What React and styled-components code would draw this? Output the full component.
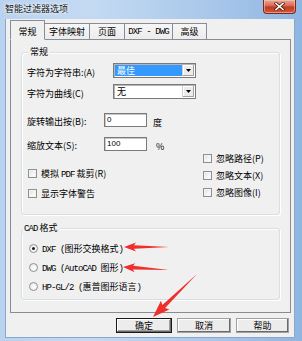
import React from "react";
import styled, { createGlobalStyle } from "styled-components";

const Global = createGlobalStyle`
  html, body { margin: 0; padding: 0; }
  body {
    width: 302px; height: 341px; overflow: hidden; background: #ffffff;
    font-family: "Noto Sans CJK SC", sans-serif;
  }
`;

const CJK = `"Noto Sans CJK SC", sans-serif`;
const MONO = `"Liberation Mono", "Noto Sans CJK SC", monospace`;

const Window = styled.div`
  position: relative;
  width: 302px;
  height: 341px;
  box-sizing: border-box;
  display: flex;
  flex-direction: column;
  padding: 0 7px 3px 5px;
  background: linear-gradient(90deg, #b9d2ef 0%, #c4daf3 30%, #a9c7ea 70%, #8fb5e2 100%);
`;

const TitleBar = styled.div`
  height: 19px;
  display: flex;
  align-items: flex-start;
  flex: none;
`;

const TitleText = styled.div`
  font-family: ${CJK};
  font-size: 9px;
  line-height: 18px;
  color: #101010;
  text-shadow: 0 0 4px #ffffff, 0 0 2px #ffffff;
`;

const CloseButton = styled.div`
  margin-left: auto;
  margin-right: -1px;
  width: 33px;
  height: 14px;
  box-sizing: border-box;
  border: 1px solid #7a2a1c;
  border-top: none;
  border-radius: 0 0 4px 4px;
  background: linear-gradient(180deg, #e9a597 0%, #d9735d 40%, #c23b1f 55%, #cf5a3e 100%);
  box-shadow: inset 0 0 0 1px rgba(255, 210, 200, 0.5);
  display: flex;
  align-items: center;
  justify-content: center;
`;

const Client = styled.div`
  flex: 1;
  display: flex;
  flex-direction: column;
  background: #f0f0f0;
  padding: 0 4px 0 5px;
  box-shadow: inset 1px 0 0 #8aa6c8, inset -1px 0 0 #8aa6c8, inset 0 -1px 0 #8aa6c8;
`;

const TabStrip = styled.div`
  display: flex;
  align-items: flex-end;
  height: 20px;
  flex: none;
  position: relative;
  z-index: 1;
`;

const Tab = styled.div`
  width: ${(p) => p.$w}px;
  height: ${(p) => (p.$active ? 20 : 16)}px;
  box-sizing: border-box;
  border: 1px solid #898c95;
  border-bottom: ${(p) => (p.$active ? "1px solid #f0f0f0" : "none")};
  border-left: ${(p) => (p.$first || p.$active ? "1px solid #898c95" : "none")};
  background: ${(p) => (p.$active ? "#f0f0f0" : "linear-gradient(180deg, #f6f6f6 0%, #ececec 100%)")};
  font-family: ${CJK};
  font-size: 9px;
  color: #000;
  display: flex;
  align-items: center;
  justify-content: center;
  padding-top: ${(p) => (p.$active ? 3 : 0)}px;
  margin-bottom: ${(p) => (p.$active ? -1 : 0)}px;
  white-space: nowrap;
`;

const Lat = styled.span`
  font-family: "Liberation Mono", monospace;
  letter-spacing: -0.9px;
`;

const Panel = styled.div`
  flex: 1;
  box-sizing: border-box;
  border: 1px solid #898c95;
  background: #f0f0f0;
  padding: 12px 10px 12px 10px;
  display: flex;
  flex-direction: column;
  gap: 13px;
`;

const Group = styled.div`
  position: relative;
  box-sizing: border-box;
  height: ${(p) => p.$h}px;
  border: 1px solid #d5dfe5;
  border-radius: 3px;
  box-shadow: inset 1px 1px 0 #ffffff, 1px 1px 0 #ffffff;
  padding: ${(p) => p.$pad};
  display: flex;
  flex-direction: column;
`;

const Legend = styled.span`
  position: absolute;
  top: -7px;
  left: ${(p) => p.$x}px;
  padding: 0 2px;
  background: #f0f0f0;
  font-family: ${CJK};
  font-size: 9px;
  line-height: 12px;
  color: #000;
`;

const FieldRow = styled.div`
  display: flex;
  align-items: center;
  height: ${(p) => p.$h}px;
  margin-top: ${(p) => p.$mt}px;
`;

const Label = styled.span`
  width: ${(p) => p.$w}px;
  flex: none;
  font-family: ${CJK};
  font-size: 9px;
  color: #000;
  white-space: nowrap;
  margin-top: 3px;
`;

const Select = styled.div`
  width: 83px;
  height: 15px;
  box-sizing: border-box;
  border: 1px solid #7a7a7a;
  box-shadow: inset 1px 1px 0 #b5b5b5;
  background: #ffffff;
  display: flex;
  padding: 1px;
`;

const SelectValue = styled.div`
  flex: 1;
  font-family: ${CJK};
  font-size: 9px;
  line-height: 11px;
  padding-left: 2px;
  color: ${(p) => (p.$sel ? "#ffffff" : "#000000")};
  background: ${(p) => (p.$sel ? "#3399ff" : "transparent")};
`;

const DropButton = styled.div`
  width: 12px;
  box-sizing: border-box;
  background: #ececec;
  border-left: 1px solid #d0d0d0;
  box-shadow: inset -1px -1px 0 #a0a0a0, inset 1px 1px 0 #ffffff;
  display: flex;
  align-items: center;
  justify-content: center;
`;

const TextInput = styled.div`
  width: 43px;
  height: 14px;
  box-sizing: border-box;
  border: 1px solid #7a7a7a;
  box-shadow: inset 1px 1px 0 #c8c8c8;
  background: #ffffff;
  font-family: "Liberation Sans", sans-serif;
  font-size: 8px;
  line-height: 12px;
  padding-left: 2px;
  color: #000;
`;

const Unit = styled.span`
  margin-left: ${(p) => p.$ml}px;
  font-family: ${CJK};
  font-size: 9px;
  color: #000;
  margin-top: ${(p) => p.$mt || 0}px;
`;

const ChecksArea = styled.div`
  display: flex;
  margin-top: 3px;
`;

const CheckColumn = styled.div`
  display: flex;
  flex-direction: column;
  gap: ${(p) => p.$gap}px;
  margin-top: ${(p) => p.$mt || 0}px;
  margin-left: ${(p) => p.$ml || "0"};
  width: ${(p) => (p.$w ? `${p.$w}px` : "auto")};
  padding-left: ${(p) => p.$pl || 0}px;
`;

const OptionRow = styled.div`
  display: flex;
  align-items: center;
  height: 9px;
  gap: 4px;
  font-family: ${CJK};
  font-size: 9px;
  color: #000;
  white-space: nowrap;
`;

const CheckBox = styled.span`
  width: 9px;
  height: 9px;
  flex: none;
  box-sizing: border-box;
  border: 1px solid #8e8f8f;
  background: linear-gradient(135deg, #dcdcdc 0%, #f6f6f6 60%, #ffffff 100%);
  box-shadow: inset 0 0 0 1px #f4f4f4;
`;

const Radio = styled.span`
  width: 9px;
  height: 9px;
  flex: none;
  box-sizing: border-box;
  border-radius: 50%;
  border: 1px solid #8e8f8f;
  background: radial-gradient(circle at 60% 60%, #ffffff 0%, #f0f0f0 60%, #dcdcdc 100%);
  display: flex;
  align-items: center;
  justify-content: center;
  &::after {
    content: "";
    width: 3px;
    height: 3px;
    border-radius: 50%;
    background: ${(p) => (p.$checked ? "#1b1b1b" : "transparent")};
  }
`;

const RadioList = styled.div`
  display: flex;
  flex-direction: column;
  gap: 10px;
`;

const ButtonRow = styled.div`
  display: flex;
  justify-content: flex-end;
  gap: 5px;
  margin: 5px 2px 5px 0;
  flex: none;
`;

const Button = styled.div`
  width: ${(p) => p.$w}px;
  height: 15px;
  box-sizing: border-box;
  display: flex;
  align-items: center;
  justify-content: center;
  font-family: ${CJK};
  font-size: 9px;
  color: #000;
  background: #ececec;
  border: 1px solid ${(p) => (p.$default ? "#1a1a1a" : "#a0a0a0")};
  box-shadow: ${(p) =>
    p.$default
      ? "inset -1px -1px 0 #696969, inset 1px 1px 0 #ffffff, inset -2px -2px 0 #a0a0a0"
      : "inset -1px -1px 0 #696969, inset 1px 1px 0 #ffffff"};
`;

const Overlay = styled.svg`
  position: absolute;
  left: 0;
  top: 0;
  width: 302px;
  height: 341px;
  pointer-events: none;
`;

function Arrow({ tip, tail, head = 12, half = 4.5, tailHalf = 1.6 }) {
  const dx = tail[0] - tip[0];
  const dy = tail[1] - tip[1];
  const len = Math.hypot(dx, dy);
  const ux = dx / len;
  const uy = dy / len;
  const nx = -uy;
  const ny = ux;
  const hb = [tip[0] + ux * head, tip[1] + uy * head];
  const neck = [tip[0] + ux * (head - 2), tip[1] + uy * (head - 2)];
  const pts = [
    tip,
    [hb[0] + nx * half, hb[1] + ny * half],
    [neck[0] + nx * tailHalf, neck[1] + ny * tailHalf],
    tail,
    [neck[0] - nx * tailHalf, neck[1] - ny * tailHalf],
    [hb[0] - nx * half, hb[1] - ny * half],
  ];
  return <polygon points={pts.map((p) => p.join(",")).join(" ")} fill="#ee2f2b" />;
}

export default function App() {
  return (
    <>
      <Global />
      <Window>
        <TitleBar>
          <TitleText>智能过滤器选项</TitleText>
          <CloseButton>
            <svg width="11" height="9" viewBox="0 0 11 9">
              <path d="M2 1.5 L9 7.5 M9 1.5 L2 7.5" stroke="#4a1a10" strokeWidth="3" strokeLinecap="square" />
              <path d="M2 1.5 L9 7.5 M9 1.5 L2 7.5" stroke="#ffffff" strokeWidth="1.6" strokeLinecap="square" />
            </svg>
          </CloseButton>
        </TitleBar>
        <Client>
          <TabStrip>
            <Tab $w={35} $active $first>常规</Tab>
            <Tab $w={45}>字体映射</Tab>
            <Tab $w={35}>页面</Tab>
            <Tab $w={48}><Lat>DXF - DWG</Lat></Tab>
            <Tab $w={34}>高级</Tab>
          </TabStrip>
          <Panel>
            <Group $h={163} $pad="10px 0 16px 5px">
              <Legend $x={6}>常规</Legend>
              <FieldRow $h={15} $mt={0}>
                <Label $w={86}>字符为字符串:(A)</Label>
                <Select>
                  <SelectValue $sel>最佳</SelectValue>
                  <DropButton>
                    <svg width="5" height="3" viewBox="0 0 5 3"><path d="M0 0 H5 L2.5 3 Z" fill="#000" /></svg>
                  </DropButton>
                </Select>
              </FieldRow>
              <FieldRow $h={15} $mt={6}>
                <Label $w={86}>字符为曲线(C)</Label>
                <Select>
                  <SelectValue>无</SelectValue>
                  <DropButton>
                    <svg width="5" height="3" viewBox="0 0 5 3"><path d="M0 0 H5 L2.5 3 Z" fill="#000" /></svg>
                  </DropButton>
                </Select>
              </FieldRow>
              <FieldRow $h={14} $mt={14}>
                <Label $w={77}>旋转输出按(B):</Label>
                <TextInput>0</TextInput>
                <Unit $ml={6} $mt={4}>度</Unit>
              </FieldRow>
              <FieldRow $h={14} $mt={10}>
                <Label $w={77}>缩放文本(S):</Label>
                <TextInput>100</TextInput>
                <Unit $ml={9} $mt={4}>%</Unit>
              </FieldRow>
              <ChecksArea>
                <CheckColumn $gap={11} $mt={15} $pl={1}>
                  <OptionRow>
                    <CheckBox />
                    <span>模拟 <Lat>PDF</Lat> 裁剪(R)</span>
                  </OptionRow>
                  <OptionRow>
                    <CheckBox />
                    <span>显示字体警告</span>
                  </OptionRow>
                </CheckColumn>
                <CheckColumn $gap={8} $ml="auto" $w={76}>
                  <OptionRow>
                    <CheckBox />
                    <span>忽略路径(P)</span>
                  </OptionRow>
                  <OptionRow>
                    <CheckBox />
                    <span>忽略文本(X)</span>
                  </OptionRow>
                  <OptionRow>
                    <CheckBox />
                    <span>忽略图像(I)</span>
                  </OptionRow>
                </CheckColumn>
              </ChecksArea>
            </Group>
            <Group $h={72} $pad="15px 0 8px 7px">
              <Legend $x={0}><Lat>CAD</Lat> 格式</Legend>
              <RadioList>
                <OptionRow>
                  <Radio $checked />
                  <span><Lat>DXF (</Lat>图形交换格式<Lat>)</Lat></span>
                </OptionRow>
                <OptionRow>
                  <Radio />
                  <span><Lat>DWG (AutoCAD </Lat>图形<Lat>)</Lat></span>
                </OptionRow>
                <OptionRow>
                  <Radio />
                  <span><Lat>HP-GL/2 (</Lat>惠普图形语言<Lat>)</Lat></span>
                </OptionRow>
              </RadioList>
            </Group>
          </Panel>
          <ButtonRow>
            <Button $w={56} $default>确定</Button>
            <Button $w={54}>取消</Button>
            <Button $w={53}>帮助</Button>
          </ButtonRow>
        </Client>
        <Overlay viewBox="0 0 302 341">
          <Arrow tip={[124, 247]} tail={[169, 247]} head={12} half={4.5} tailHalf={1.8} />
          <Arrow tip={[123, 267]} tail={[169, 270]} head={12} half={4.5} tailHalf={1.8} />
          <Arrow tip={[153, 317]} tail={[197, 274]} head={17} half={6} tailHalf={2} />
        </Overlay>
      </Window>
    </>
  );
}
